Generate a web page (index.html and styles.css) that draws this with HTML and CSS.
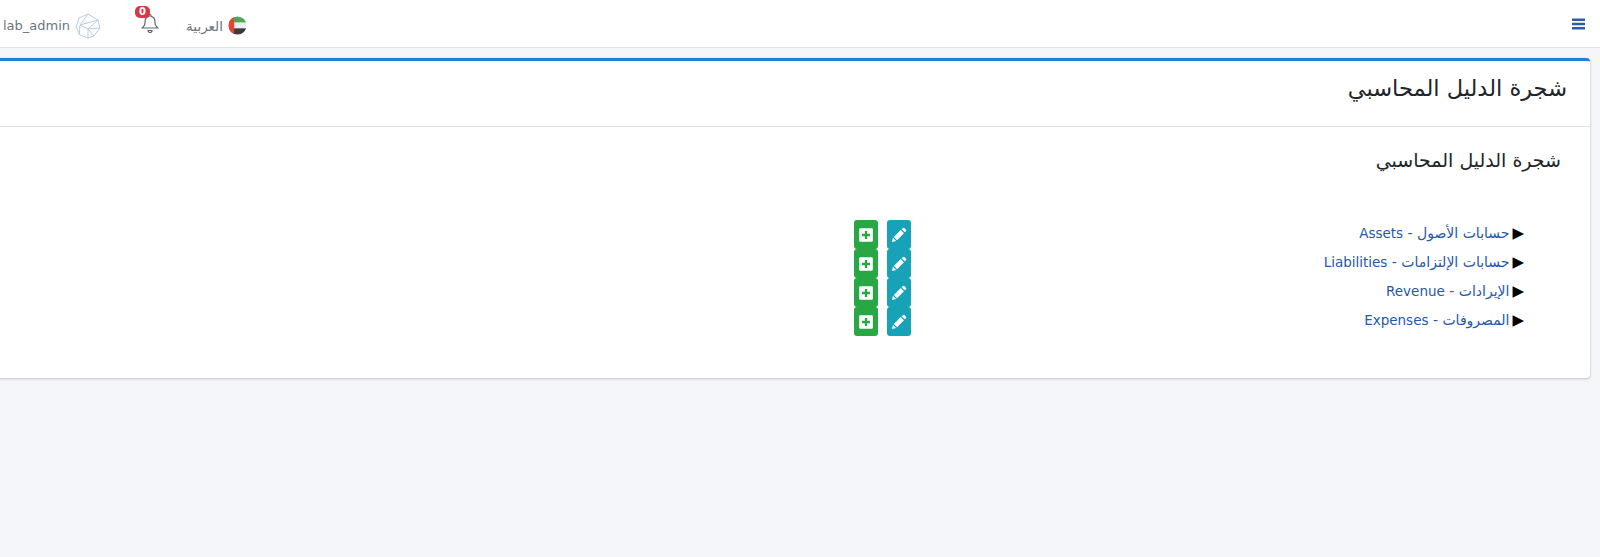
FILE: index.html
```html
<!DOCTYPE html>
<html lang="ar" dir="rtl">
<head>
  <meta charset="UTF-8" />
  <title>شجرة الدليل المحاسبي</title>
  <link rel="stylesheet" href="styles.css">
</head>
<body>
  <header class="topbar">
    <a href="#" class="menu-btn">
      <svg viewBox="0 0 13 12"><path d="M0 .5h13V3H0zM0 4.800h13v2.400H0zM0 9h13v2.500H0z"/></svg>
    </a>
    <div class="topbar-left">
      <a href="#" class="lang">
        <svg class="flag" viewBox="0 0 20 20">
          <clipPath id="flagClip"><circle cx="10" cy="10" r="9.500"/></clipPath>
          <g clip-path="url(#flagClip)">
            <rect width="20" height="7" fill="#4fa75b"/>
            <rect y="7" width="20" height="6" fill="#eeeeee"/>
            <rect y="13" width="20" height="7" fill="#3a3a3a"/>
            <rect width="6.500" height="20" fill="#e4452f"/>
          </g>
        </svg>
        <span>العربية</span>
      </a>
      <a href="#" class="bell">
        <svg viewBox="0 0 18 20"><path d="M9 1.500a1 1 0 0 1 1 1v.8c2.600.5 3.900 2.500 3.900 5 0 3.400 1 5.300 2.900 6.700H1.200c1.900-1.400 2.900-3.300 2.900-6.700 0-2.500 1.300-4.500 3.900-5v-.8a1 1 0 0 1 1-1zM7 17.500h4a2 2 0 0 1-4 0z" fill="none" stroke="#666" stroke-width="1.200"/></svg>
        <span class="badge">0</span>
      </a>
      <a href="#" class="user">
        <svg class="avatar" viewBox="0 0 26 26">
          <path d="M13 1l10 6 2 8-6 8-6 2-8-3-4-8 3-9zM13 1L5 12l8 4 6 7M5 12l-1 10M5 12l18-5M13 16l10-9M13 16l12-1M13 16l0 9" fill="none" stroke="#b4cfe3" stroke-width="1"/>
        </svg>
        <span>lab_admin</span>
      </a>
    </div>
  </header>

  <main class="content">
    <section class="card">
      <div class="card-header">
        <h1>شجرة الدليل المحاسبي</h1>
      </div>
      <div class="card-body">
        <h2>شجرة الدليل المحاسبي</h2>
        <ul class="tree">
          <li class="tree-row">
            <a href="#" class="tree-label">حسابات الأصول - <span class="latin">Assets</span></a>
            <div class="tree-actions">
              <a href="#" class="act act-edit"><svg viewBox="0 0 14 14"><path d="M.8 13.200l.9-3.700 2.800 2.800zM2.500 8.700l6-6 2.800 2.800-6 6zM9.300 1.900l.9-.9a1.200 1.200 0 0 1 1.700 0l1.100 1.100a1.200 1.200 0 0 1 0 1.700l-.9.9z"/></svg></a>
              <a href="#" class="act act-add"><svg viewBox="0 0 14 14"><path fill-rule="evenodd" d="M2 1h10a1 1 0 0 1 1 1v10a1 1 0 0 1-1 1H2a1 1 0 0 1-1-1V2a1 1 0 0 1 1-1zM6 3.500V6H3.500v2H6v2.500h2V8h2.500V6H8V3.500z"/></svg></a>
            </div>
          </li>
          <li class="tree-row">
            <a href="#" class="tree-label">حسابات الإلتزامات - <span class="latin">Liabilities</span></a>
            <div class="tree-actions">
              <a href="#" class="act act-edit"><svg viewBox="0 0 14 14"><path d="M.8 13.200l.9-3.700 2.800 2.800zM2.500 8.700l6-6 2.800 2.800-6 6zM9.300 1.900l.9-.9a1.200 1.200 0 0 1 1.700 0l1.100 1.100a1.200 1.200 0 0 1 0 1.700l-.9.9z"/></svg></a>
              <a href="#" class="act act-add"><svg viewBox="0 0 14 14"><path fill-rule="evenodd" d="M2 1h10a1 1 0 0 1 1 1v10a1 1 0 0 1-1 1H2a1 1 0 0 1-1-1V2a1 1 0 0 1 1-1zM6 3.500V6H3.500v2H6v2.500h2V8h2.500V6H8V3.500z"/></svg></a>
            </div>
          </li>
          <li class="tree-row">
            <a href="#" class="tree-label">الإيرادات - <span class="latin">Revenue</span></a>
            <div class="tree-actions">
              <a href="#" class="act act-edit"><svg viewBox="0 0 14 14"><path d="M.8 13.200l.9-3.700 2.800 2.800zM2.500 8.700l6-6 2.800 2.800-6 6zM9.300 1.900l.9-.9a1.200 1.200 0 0 1 1.700 0l1.100 1.100a1.200 1.200 0 0 1 0 1.700l-.9.9z"/></svg></a>
              <a href="#" class="act act-add"><svg viewBox="0 0 14 14"><path fill-rule="evenodd" d="M2 1h10a1 1 0 0 1 1 1v10a1 1 0 0 1-1 1H2a1 1 0 0 1-1-1V2a1 1 0 0 1 1-1zM6 3.500V6H3.500v2H6v2.500h2V8h2.500V6H8V3.500z"/></svg></a>
            </div>
          </li>
          <li class="tree-row">
            <a href="#" class="tree-label">المصروفات - <span class="latin">Expenses</span></a>
            <div class="tree-actions">
              <a href="#" class="act act-edit"><svg viewBox="0 0 14 14"><path d="M.8 13.200l.9-3.700 2.800 2.800zM2.500 8.700l6-6 2.800 2.800-6 6zM9.300 1.900l.9-.9a1.200 1.200 0 0 1 1.700 0l1.100 1.100a1.200 1.200 0 0 1 0 1.700l-.9.9z"/></svg></a>
              <a href="#" class="act act-add"><svg viewBox="0 0 14 14"><path fill-rule="evenodd" d="M2 1h10a1 1 0 0 1 1 1v10a1 1 0 0 1-1 1H2a1 1 0 0 1-1-1V2a1 1 0 0 1 1-1zM6 3.500V6H3.500v2H6v2.500h2V8h2.500V6H8V3.500z"/></svg></a>
            </div>
          </li>
        </ul>
      </div>
    </section>
  </main>
</body>
</html>
```

FILE: styles.css
```css
* {
  margin: 0;
  padding: 0;
  box-sizing: border-box;
}
html, body {
  height: 100%;
  overflow: hidden;
}
body {
  font-family: 'DejaVu Sans', sans-serif;
  background: #f4f6f9;
  color: #212529;
}
a {
  text-decoration: none;
}
.topbar {
  height: 48px;
  background: #fff;
  border-bottom: 1px solid #dee2e6;
  display: flex;
  justify-content: space-between;
  align-items: center;
  padding: 0 15px 0 3px;
}
.menu-btn svg {
  display: block;
  width: 13px;
  height: 12px;
  fill: #2f5ea8;
}
.topbar-left {
  display: flex;
  align-items: center;
  height: 100%;
  padding-top: 4px;
}
.lang, .user {
  display: flex;
  align-items: center;
  color: #6c757d;
}
.lang {
  gap: 5px;
  font-size: 13.5px;
  margin-left: 27px;
}
.flag {
  width: 19px;
  height: 19px;
}
.bell {
  position: relative;
  display: block;
  width: 18px;
  height: 20px;
  margin: -6px 0 0 40px;
}
.bell svg {
  display: block;
  width: 18px;
  height: 20px;
}
.badge {
  position: absolute;
  top: -7px;
  right: 9px;
  background: #dc3545;
  color: #fff;
  font-size: 10px;
  font-weight: 700;
  line-height: 12px;
  padding: 0 4px;
  border-radius: 5px;
}
.user {
  gap: 5px;
  font-size: 13px;
}
.avatar {
  width: 26px;
  height: 26px;
}
.content {
  padding: 10px 10px 0 0;
  margin-left: -10px;
}
.card {
  height: 320px;
  background: #fff;
  border-top: 3px solid #1c80d8;
  border-radius: 4px;
  box-shadow: 0 0 1px rgba(0,0,0,.125), 0 1px 3px rgba(0,0,0,.2);
}
.card-header {
  height: 66px;
  border-bottom: 1px solid #dee2e6;
  display: flex;
  align-items: center;
  padding: 0 23px 12px;
}
.card-header h1 {
  font-size: 22.5px;
  font-weight: 400;
}
.card-body {
  padding: 20px 29px 0 0;
}
.card-body h2 {
  font-size: 19px;
  font-weight: 400;
  line-height: 26px;
  margin-bottom: 47px;
}
.tree {
  list-style: none;
  padding-right: 37px;
}
.tree-row {
  height: 29px;
  display: grid;
  grid-template-columns: 613px auto;
  justify-content: start;
  align-items: center;
}
.tree-label {
  color: #2558a8;
  font-size: 14px;
  line-height: 20px;
  padding-bottom: 3px;
}
.tree-label::before {
  content: "\25B6";
  color: #000;
  font-size: 15px;
  line-height: 1;
  margin-left: 3px;
}
.latin {
  font-size: 13.5px;
}
.tree-actions {
  display: flex;
  gap: 9px;
}
.act {
  display: flex;
  align-items: center;
  justify-content: center;
  width: 24px;
  height: 29px;
  border-radius: 3px;
}
.act svg {
  width: 16px;
  height: 16px;
  fill: #fff;
}
.act-edit {
  background: #17a2b8;
}
.act-add {
  background: #28a745;
}
```
